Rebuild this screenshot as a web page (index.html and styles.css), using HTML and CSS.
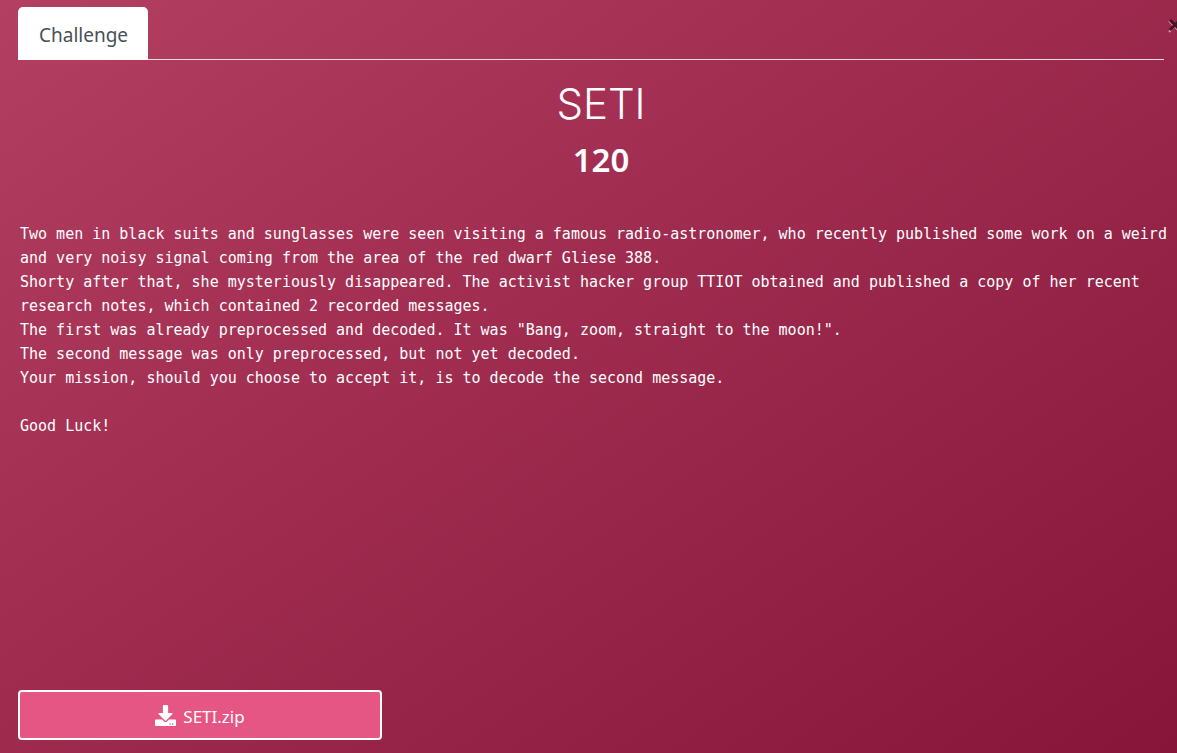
FILE: index.html
```html
<!DOCTYPE html>
<html lang="en">
<head>
<meta charset="utf-8">
<meta name="viewport" content="width=device-width, initial-scale=1">
<title>SETI</title>
<link rel="stylesheet" href="styles.css">
</head>
<body>
<main class="challenge">
  <button class="close" type="button" aria-label="Close">
    <svg class="close-icon" viewBox="0 0 14 16" aria-hidden="true">
      <path class="close-glow" d="M1 4l11 11M12 4L1 15"/>
      <path class="close-mark" d="M2 3l10 10M12 3L2 13"/>
    </svg>
  </button>
  <nav class="tabs">
    <a class="tab" href="#challenge">Challenge</a>
  </nav>
  <section class="content" id="challenge">
    <h1 class="name">SETI</h1>
    <h2 class="points">120</h2>
    <div class="description">
      <p>Two men in black suits and sunglasses were seen visiting a famous radio-astronomer, who recently published some work on a weird and very noisy signal coming from the area of the red dwarf Gliese 388.<br>
      Shorty after that, she mysteriously disappeared. The activist hacker group TTIOT obtained and published a copy of her recent research notes, which contained 2 recorded messages.<br>
      The first was already preprocessed and decoded. It was "Bang, zoom, straight to the moon!".<br>
      The second message was only preprocessed, but not yet decoded.<br>
      Your mission, should you choose to accept it, is to decode the second message.</p>
      <p>Good Luck!</p>
    </div>
  </section>
  <footer class="files">
    <a class="file" href="#SETI.zip">
      <svg class="file-icon" viewBox="0 0 512 512" aria-hidden="true"><path fill="currentColor" d="M216 0h80c13.300 0 24 10.700 24 24v168h87.700c17.800 0 26.700 21.500 14.100 34.100L269.700 378.300c-7.500 7.500-19.800 7.500-27.300 0L90.100 226.100c-12.600-12.600-3.700-34.100 14.100-34.100H192V24c0-13.300 10.700-24 24-24zm296 376v112c0 13.300-10.700 24-24 24H24c-13.300 0-24-10.700-24-24V376c0-13.300 10.700-24 24-24h146.700l49 49c20.100 20.100 52.500 20.100 72.600 0l49-49H488c13.300 0 24 10.700 24 24zm-124 88c0-11-9-20-20-20s-20 9-20 20 9 20 20 20 20-9 20-20zm64 0c0-11-9-20-20-20s-20 9-20 20 9 20 20 20 20-9 20-20z"/></svg>
      <span class="file-name">SETI.zip</span>
    </a>
  </footer>
</main>
</body>
</html>
```
FILE: styles.css
```css
* {
  box-sizing: border-box;
}

body {
  margin: 0;
  font-family: "Noto Sans", "Open Sans", sans-serif;
  color: #fff;
}

.challenge {
  position: relative;
  display: flex;
  flex-direction: column;
  min-height: 100vh;
  padding: 7px 13px 13px 18px;
  overflow: hidden;
  background: linear-gradient(145deg, #b33f62, #861539);
}

.close {
  position: absolute;
  top: 17px;
  right: -5px;
  padding: 0;
  border: 0;
  background: none;
  cursor: pointer;
}

.close-icon {
  display: block;
  width: 14px;
  height: 16px;
  fill: none;
}

.close-glow {
  stroke: #fff;
  stroke-width: 2;
  opacity: 0.5;
}

.close-mark {
  stroke: #4a1225;
  stroke-width: 3;
}

.tabs {
  display: flex;
  border-bottom: 1px solid #f3dde4;
}

.tab {
  margin-bottom: -1px;
  padding: 14px 20px 11px 21px;
  border-radius: 5px 5px 0 0;
  background: #fff;
  color: #495057;
  font-size: 19px;
  line-height: 28px;
  text-decoration: none;
}

.content {
  flex: 1;
  margin-right: -18px;
  padding: 20px 0 24px 2px;
}

.name,
.points {
  margin: 0;
  text-align: center;
}

.name {
  padding-bottom: 8px;
  font-family: Inter, sans-serif;
  font-size: 42px;
  font-weight: 300;
  line-height: 48px;
}

.points {
  padding-bottom: 38px;
  font-size: 33px;
  font-weight: 600;
  line-height: 48px;
}

.description {
  font-family: "DejaVu Sans Mono", monospace;
  font-size: 15px;
  line-height: 24px;
}

.description p {
  margin: 0 0 24px;
}

.files {
  display: grid;
  grid-template-columns: 364px;
}

.file {
  display: flex;
  align-items: center;
  justify-content: center;
  gap: 7px;
  height: 50px;
  border: 2px solid #fff;
  border-radius: 4px;
  background: #e65685;
  color: #fff;
  font-size: 17px;
  line-height: 24px;
  text-decoration: none;
}

.file-icon {
  width: 21px;
  height: 21px;
}

.file-name {
  padding-top: 3px;
}
```
